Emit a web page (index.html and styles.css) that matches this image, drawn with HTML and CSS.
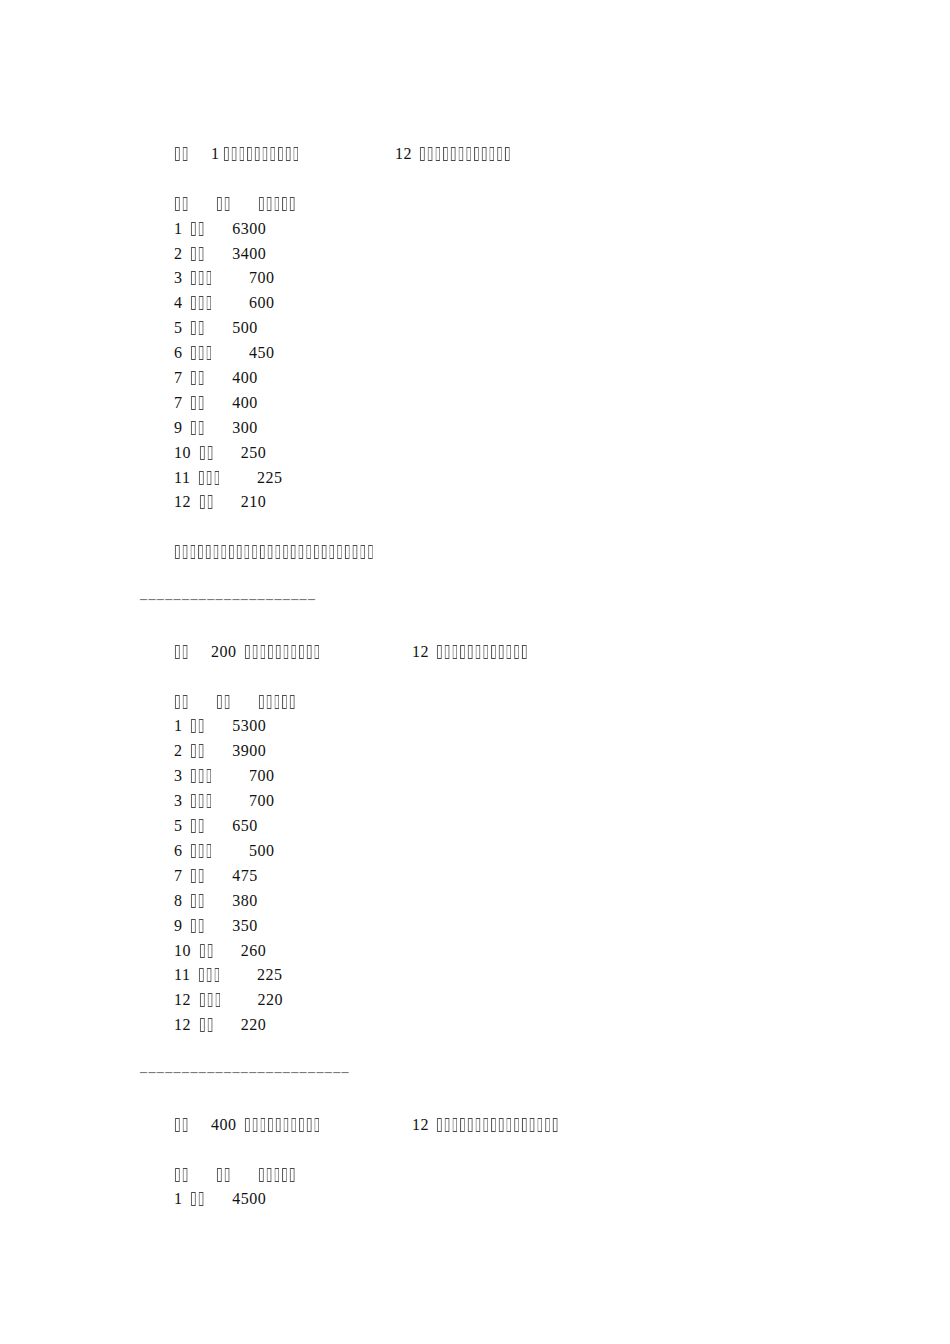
FILE: index.html
```html
<!DOCTYPE html>
<html lang="zh">
<head>
<meta charset="utf-8">
<title>排名</title>
<link rel="stylesheet" href="styles.css">
</head>
<body>
<div class="page">

  <div class="line"><span class="hw"><span class="z">▯▯</span></span><span class="hm1"><span>1</span><span class="z zt">▯▯▯▯▯▯▯▯▯▯</span></span><span>12</span><span class="z zs">▯▯▯▯▯▯▯▯▯▯▯▯</span></div>
  <div class="line"></div>
  <div class="line"><span class="cw"><span class="z">▯▯</span></span><span class="cw"><span class="z">▯▯</span></span><span class="z">▯▯▯▯▯</span></div>
  <div class="line"><span class="n">1</span> <span class="z zr">▯▯</span><span class="n k2">6300</span></div>
  <div class="line"><span class="n">2</span> <span class="z zr">▯▯</span><span class="n k2">3400</span></div>
  <div class="line"><span class="n">3</span> <span class="z zr">▯▯▯</span><span class="n k3">700</span></div>
  <div class="line"><span class="n">4</span> <span class="z zr">▯▯▯</span><span class="n k3">600</span></div>
  <div class="line"><span class="n">5</span> <span class="z zr">▯▯</span><span class="n k2">500</span></div>
  <div class="line"><span class="n">6</span> <span class="z zr">▯▯▯</span><span class="n k3">450</span></div>
  <div class="line"><span class="n">7</span> <span class="z zr">▯▯</span><span class="n k2">400</span></div>
  <div class="line"><span class="n">7</span> <span class="z zr">▯▯</span><span class="n k2">400</span></div>
  <div class="line"><span class="n">9</span> <span class="z zr">▯▯</span><span class="n k2">300</span></div>
  <div class="line"><span class="n">10</span> <span class="z zr">▯▯</span><span class="n k2">250</span></div>
  <div class="line"><span class="n">11</span> <span class="z zr">▯▯▯</span><span class="n k3">225</span></div>
  <div class="line"><span class="n">12</span> <span class="z zr">▯▯</span><span class="n k2">210</span></div>
  <div class="line"></div>
  <div class="line"><span class="z">▯▯▯▯▯▯▯▯▯▯▯▯▯▯▯▯▯▯▯▯▯▯▯▯▯▯</span></div>
  <div class="line"></div>
  <div class="line rule">–––––––––––––––––––––</div>
  <div class="line"></div>

  <div class="line"><span class="hw"><span class="z">▯▯</span></span><span class="hm2"><span>200</span><span class="z zs">▯▯▯▯▯▯▯▯▯▯</span></span><span>12</span><span class="z zs">▯▯▯▯▯▯▯▯▯▯▯▯</span></div>
  <div class="line"></div>
  <div class="line"><span class="cw"><span class="z">▯▯</span></span><span class="cw"><span class="z">▯▯</span></span><span class="z">▯▯▯▯▯</span></div>
  <div class="line"><span class="n">1</span> <span class="z zr">▯▯</span><span class="n k2">5300</span></div>
  <div class="line"><span class="n">2</span> <span class="z zr">▯▯</span><span class="n k2">3900</span></div>
  <div class="line"><span class="n">3</span> <span class="z zr">▯▯▯</span><span class="n k3">700</span></div>
  <div class="line"><span class="n">3</span> <span class="z zr">▯▯▯</span><span class="n k3">700</span></div>
  <div class="line"><span class="n">5</span> <span class="z zr">▯▯</span><span class="n k2">650</span></div>
  <div class="line"><span class="n">6</span> <span class="z zr">▯▯▯</span><span class="n k3">500</span></div>
  <div class="line"><span class="n">7</span> <span class="z zr">▯▯</span><span class="n k2">475</span></div>
  <div class="line"><span class="n">8</span> <span class="z zr">▯▯</span><span class="n k2">380</span></div>
  <div class="line"><span class="n">9</span> <span class="z zr">▯▯</span><span class="n k2">350</span></div>
  <div class="line"><span class="n">10</span> <span class="z zr">▯▯</span><span class="n k2">260</span></div>
  <div class="line"><span class="n">11</span> <span class="z zr">▯▯▯</span><span class="n k3">225</span></div>
  <div class="line"><span class="n">12</span> <span class="z zr">▯▯▯</span><span class="n k3">220</span></div>
  <div class="line"><span class="n">12</span> <span class="z zr">▯▯</span><span class="n k2">220</span></div>
  <div class="line"></div>
  <div class="line rule">–––––––––––––––––––––––––</div>
  <div class="line"></div>

  <div class="line"><span class="hw"><span class="z">▯▯</span></span><span class="hm2"><span>400</span><span class="z zs">▯▯▯▯▯▯▯▯▯▯</span></span><span>12</span><span class="z zs">▯▯▯▯▯▯▯▯▯▯▯▯▯▯▯▯</span></div>
  <div class="line"></div>
  <div class="line"><span class="cw"><span class="z">▯▯</span></span><span class="cw"><span class="z">▯▯</span></span><span class="z">▯▯▯▯▯</span></div>
  <div class="line"><span class="n">1</span> <span class="z zr">▯▯</span><span class="n k2">4500</span></div>

</div>
</body>
</html>
```

FILE: styles.css
```css
html, body {
  margin: 0;
  padding: 0;
  background: #ffffff;
}

.page {
  padding: 140px 0 0 174px;
  font-family: "Liberation Serif", "Times New Roman", serif;
  font-size: 16px;
  letter-spacing: 0.5px;
  color: #111111;
}

.line {
  height: 24.9px;
  line-height: 24.9px;
  white-space: pre;
}

.z {
  display: inline-block;
  font-family: "DejaVu Sans", sans-serif;
  font-size: 19px;
  letter-spacing: 2px;
  color: #4a4a4a;
  transform: scaleX(0.62);
  transform-origin: 0 50%;
  will-change: transform;
  filter: grayscale(1);
}

.zs { margin-left: 7px; }
.zt { margin-left: 3px; }
.zr { margin-left: 3px; }

.hw { display: inline-block; width: 37px; }
.hm1 { display: inline-block; width: 184px; }
.hm2 { display: inline-block; width: 201px; }
.cw { display: inline-block; width: 42px; }

.k2 { margin-left: 17.3px; }
.k3 { margin-left: 21.6px; }

.rule {
  margin-left: -34px;
  margin-top: -1px;
  margin-bottom: 1px;
  font-size: 14px;
  font-weight: bold;
  letter-spacing: 1.4px;
  color: #7a7a7a;
}
```
